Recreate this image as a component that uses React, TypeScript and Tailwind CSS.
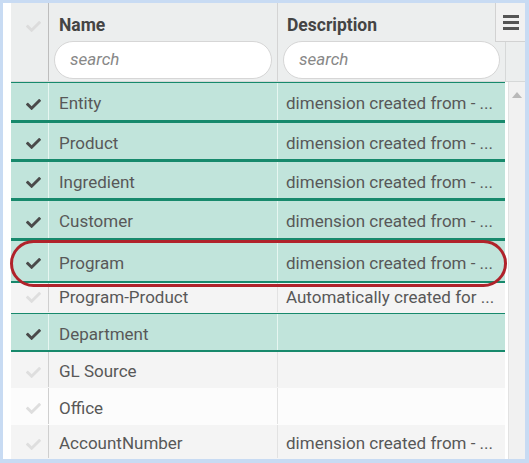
import { FaCheck } from 'react-icons/fa';

type Row = { name: string; desc: string; selected: boolean; h: number; bg?: string; pt?: string };

const rows: Row[] = [
  { name: 'Entity', desc: 'dimension created from - ...', selected: true, h: 40 },
  { name: 'Product', desc: 'dimension created from - ...', selected: true, h: 39 },
  { name: 'Ingredient', desc: 'dimension created from - ...', selected: true, h: 39 },
  { name: 'Customer', desc: 'dimension created from - ...', selected: true, h: 40 },
  { name: 'Program', desc: 'dimension created from - ...', selected: true, h: 43 },
  { name: 'Program-Product', desc: 'Automatically created for ...', selected: false, h: 30, bg: 'bg-[#f4f4f4]', pt: 'pt-[0px]' },
  { name: 'Department', desc: '', selected: true, h: 39 },
  { name: 'GL Source', desc: '', selected: false, h: 36, bg: 'bg-[#f4f4f4]' },
  { name: 'Office', desc: '', selected: false, h: 37, bg: 'bg-[#fcfcfc]' },
  { name: 'AccountNumber', desc: 'dimension created from - ...', selected: false, h: 34, bg: 'bg-[#f4f4f4]' },
];

const GridRow = ({ row }: { row: Row }) => {
  const base = row.selected
    ? 'bg-[#c1e4db] border-t border-b-2 border-[#17896c]'
    : `${row.bg} border-b border-transparent`;
  const divider = row.selected ? 'border-[#e6f6f1]' : 'border-[#cfcfcf]';
  const pt = row.pt ?? 'pt-[5px]';
  return (
    <div className={`flex items-center ${base}`} style={{ height: row.h }}>
      <div className={`w-[38px] h-full flex items-center justify-end pr-[7px] ${pt} border-r ${divider}`}>
        <FaCheck className={row.selected ? 'text-[#4a4a4a]' : 'text-[#dedede]'} size={15} />
      </div>
      <div className={`w-[229px] h-full flex items-center pl-[10px] ${pt} border-r ${row.selected ? 'border-[#e6f6f1]' : 'border-[#e2e2e2]'}`}>
        <span className="text-[17px] text-[#585858] whitespace-nowrap">{row.name}</span>
      </div>
      <div className={`flex-1 min-w-0 h-full flex items-center pl-[8px] ${pt} overflow-hidden`}>
        <span className="text-[17px] text-[#585858] whitespace-nowrap">{row.desc}</span>
      </div>
    </div>
  );
};

export default function App() {
  return (
    <div
      className="w-[529px] h-[463px] bg-[#c8dbf3] pt-[3px] pl-[3px] pr-[4px] pb-[4px]"
      style={{ fontFamily: 'Roboto, "Liberation Sans", sans-serif' }}
    >
      <div className="relative w-full h-full bg-white flex flex-col overflow-hidden">
        {/* header */}
        <div className="flex h-[79px] ml-[8px] bg-[#eceeee] border-b border-[#d6d8d8]">
          <div className="w-[38px] border-r border-[#bdbdbd] flex justify-end pr-[7px] pt-[16px]">
            <FaCheck className="text-[#dcdcdc]" size={15} />
          </div>
          <div className="w-[229px] border-r border-[#d4d4d4] px-[5px] pt-[12px] flex flex-col">
            <div className="pl-[5px] text-[17.5px] font-bold text-[#444] leading-[21px]">Name</div>
            <div className="mt-[5px] h-[38px] rounded-full bg-white border border-[#d6d6d6] flex items-center pl-[15px]">
              <span className="italic text-[17px] text-[#888]">search</span>
            </div>
          </div>
          <div className="w-[227px] px-[5px] pt-[12px] flex flex-col">
            <div className="pl-[4px] text-[17.5px] font-bold text-[#444] leading-[21px]">Description</div>
            <div className="mt-[5px] h-[38px] rounded-full bg-white border border-[#d6d6d6] flex items-center pl-[15px]">
              <span className="italic text-[17px] text-[#888]">search</span>
            </div>
          </div>
          <div className="flex-1 border-l border-[#d6d8d8]" />
        </div>

        {/* body */}
        <div className="flex flex-1 min-h-0">
          <div className="w-[494px] ml-[8px] flex flex-col">
            {rows.map((r) => (
              <GridRow key={r.name} row={r} />
            ))}
          </div>
          <div className="flex-1 ml-[3px] bg-[#f1f1f1] border-l border-[#e2e2e2] flex justify-center pt-[10px]">
            <div className="w-0 h-0 border-l-[5px] border-r-[5px] border-b-[6px] border-l-transparent border-r-transparent border-b-[#b9b9b9]" />
          </div>
        </div>

        {/* column menu button */}
        <div className="absolute top-0 right-0 w-[30px] h-[39px] bg-[#f1f1f1] border border-[#d2d2d2] border-t-0 border-r-0 flex flex-col items-center justify-center gap-[3px]">
          <div className="w-[16px] h-[3px] bg-[#555]" />
          <div className="w-[16px] h-[3px] bg-[#555]" />
          <div className="w-[16px] h-[3px] bg-[#555]" />
        </div>

        {/* highlight ellipse */}
        <div className="absolute left-[7px] top-[237px] w-[497px] h-[47px] rounded-full border-[3px] border-[#b0232b] pointer-events-none" />
      </div>
    </div>
  );
}
